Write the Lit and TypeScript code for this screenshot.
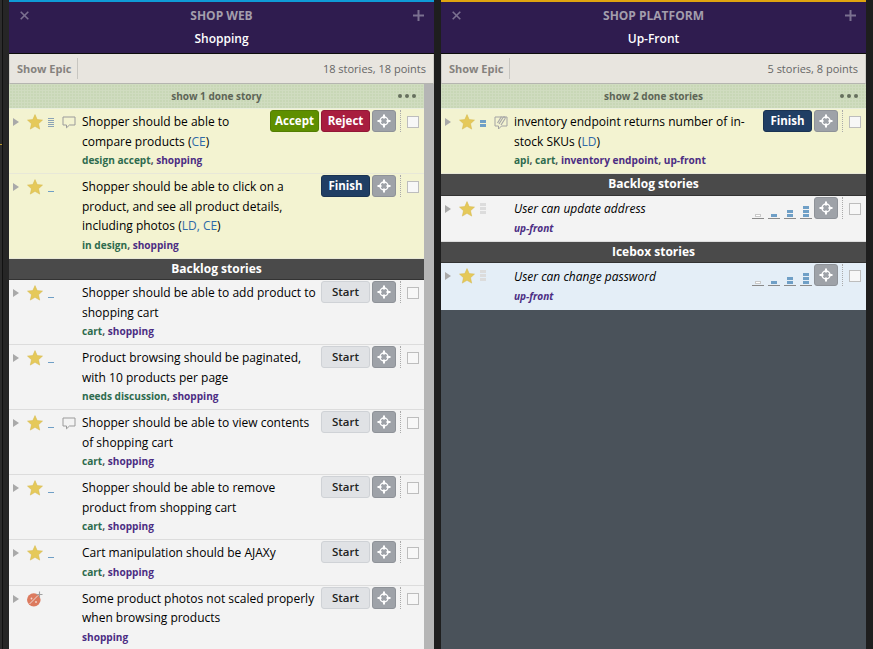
import { LitElement, html, css, svg, nothing } from "lit";
import { customElement } from "lit/decorators.js";

type Label = { t: string; epic?: boolean };
type Story = {
  text: string;
  owners?: string;
  labels: Label[];
  est?: string;
  comment?: "plain" | "clip";
  icon?: "star" | "bug";
  actions: string[];
  chooser?: boolean;
  tone?: "accepted" | "plain" | "ice";
  italic?: boolean;
};

const g = (t: string): Label => ({ t });
const p = (t: string): Label => ({ t, epic: true });

const left: (Story | string)[] = [
  { text: "Shopper should be able to compare products", owners: "CE", labels: [g("design accept"), p("shopping")], est: "five", comment: "plain", actions: ["Accept", "Reject"], tone: "accepted" },
  { text: "Shopper should be able to click on a product, and see all product details, including photos", owners: "LD, CE", labels: [g("in design"), p("shopping")], est: "one", actions: ["Finish"], tone: "accepted" },
  "Backlog stories",
  { text: "Shopper should be able to add product to shopping cart", labels: [g("cart"), p("shopping")], est: "one", actions: ["Start"] },
  { text: "Product browsing should be paginated, with 10 products per page", labels: [g("needs discussion"), p("shopping")], est: "one", actions: ["Start"] },
  { text: "Shopper should be able to view contents of shopping cart", labels: [g("cart"), p("shopping")], est: "one", comment: "plain", actions: ["Start"] },
  { text: "Shopper should be able to remove product from shopping cart", labels: [g("cart"), p("shopping")], est: "one", actions: ["Start"] },
  { text: "Cart manipulation should be AJAXy", labels: [g("cart"), p("shopping")], est: "one", actions: ["Start"] },
  { text: "Some product photos not scaled properly when browsing products", labels: [p("shopping")], icon: "bug", actions: ["Start"] },
];

const right: (Story | string)[] = [
  { text: "inventory endpoint returns number of in-stock SKUs", owners: "LD", labels: [g("api"), g("cart"), p("inventory endpoint"), p("up-front")], est: "two", comment: "clip", actions: ["Finish"], tone: "accepted" },
  "Backlog stories",
  { text: "User can update address", labels: [p("up-front")], est: "none", actions: [], chooser: true, italic: true },
  "Icebox stories",
  { text: "User can change password", labels: [p("up-front")], est: "none", actions: [], chooser: true, italic: true, tone: "ice" },
];

const star = svg`<svg class="star" viewBox="0 0 16 16" width="16" height="16"><path d="M8 .6l2.2 5 5.3.5-4 3.600 1.200 5.400L8 12.300l-4.700 2.800 1.200-5.400-4-3.600 5.300-.5z" fill="#e5c95a" stroke="#d4b64a" stroke-width=".5"/></svg>`;

const bug = svg`<svg class="star" viewBox="0 0 16 16" width="16" height="16">
  <ellipse cx="6.800" cy="8.800" rx="6.800" ry="6.600" fill="#dc7a5e"/>
  <path d="M2.500 13L11 4.500" stroke="#f3f3f3" stroke-width=".8"/>
  <circle cx="4.500" cy="7.500" r=".9" fill="#f3d9d0"/><circle cx="9" cy="11" r=".9" fill="#f3d9d0"/>
  <path d="M12.500 .5v6M9.500 3.500h6" stroke="#a0a0a0" stroke-width="1.100"/>
</svg>`;

const move = svg`<svg viewBox="0 0 16 16" width="16" height="16">
  <circle cx="8" cy="8" r="4" fill="none" stroke="#fff" stroke-width="1.500"/>
  <path d="M8 1.500v4M8 10.500v4M1.500 8h4M10.500 8h4" stroke="#fff" stroke-width="2"/>
</svg>`;

const closeIcon = svg`<svg viewBox="0 0 9 9" width="9" height="9"><path d="M.7.7l7.600 7.600M8.300.7L.7 8.300" stroke="#7b7090" stroke-width="1.600"/></svg>`;
const plusIcon = svg`<svg viewBox="0 0 11 11" width="11" height="11"><path d="M5.500 0v11M0 5.500h11" stroke="#7b7090" stroke-width="2"/></svg>`;

const commentIcon = svg`<svg viewBox="0 0 14 13" width="14" height="13"><path d="M1 1h12v8H7.500L4.500 11.800V9H1z" fill="none" stroke="#9b9b9b" stroke-width="1"/></svg>`;
const clipIcon = svg`<svg viewBox="0 0 14 15" width="14" height="15"><path d="M1 2h12v9H7.500L4.500 14v-3H1z" fill="none" stroke="#a3a3a3" stroke-width="1"/><path d="M5 9l4-6.500c1-1.500 2.800-.3 2 1.200L7 10M3.500 8l4-6.500" fill="none" stroke="#a8a8a8" stroke-width="1.200"/></svg>`;

@customElement("story-row")
class StoryRow extends LitElement {
  static properties = { story: { attribute: false } };
  declare story: Story;

  static styles = css`
    :host { display: block; }
    .row {
      display: flex;
      font: 12px/19.500px "Open Sans", sans-serif;
      color: #000;
      background: #f3f3f3;
      border-bottom: 1px solid #dcdcdc;
      padding: 3px 0 2.500px;
    }
    .row.accepted { background: #f3f3d1; border-bottom-color: #e8e8d8; }
    .row.ice { background: #e4eef7; border-bottom: none; padding-bottom: 3px; }
    .ice .text { padding-top: 1px; }
    .ice .labels { padding-top: .5px; }
    .it .labels { padding-top: .5px; }
    .meta { width: 73px; flex: none; display: flex; align-items: flex-start; height: 19px; padding-top: 2px; box-sizing: border-box; }
    .tri { width: 0; height: 0; border-left: 6px solid #a9a9a9; border-top: 4px solid transparent; border-bottom: 4px solid transparent; margin: 4px 0 0 4px; flex: none; }
    .star { margin: 0 0 0 8px; flex: none; }
    .est { width: 6px; height: 14px; margin: 0 1px 0 5px; flex: none; display: flex; flex-direction: column; justify-content: flex-end; gap: 1px; padding-bottom: 1px; box-sizing: border-box; }
    .est i { display: block; height: 3px; background: #6f9fc6; flex: none; }
    .est.five i { height: 1px; background: #8ba3b6; }
    .est.none i { background: #dcdcdc; }
    .est.one i { height: 1px; background: #6f9fc6; }
    .cmt { margin-left: 7px; flex: none; margin-top: 1px; }
    .body { flex: 1; min-width: 0; }
    .actions { float: right; display: flex; gap: 2px; margin: -2px 0 0 2px; height: 22px; align-items: stretch; }
    .btn { width: 49px; box-sizing: border-box; border-radius: 3px; font: 700 11.500px/20px "Open Sans", sans-serif; text-align: center; color: #fff; border: 1px solid transparent; }
    .Accept { background: #5e8f00; border-color: #537e02; }
    .Reject { background: #a81d3f; border-color: #921736; }
    .Finish { background: #203e64; border-color: #1a3352; }
    .Start { background: #e0e2e5; border-color: #cfd2d6; color: #222; font-weight: 600; }
    .mv { width: 24px; box-sizing: border-box; background: #9ea2a8; border: 1px solid #8e9298; border-radius: 3px; display: flex; align-items: center; justify-content: center; }
    .chooser { display: flex; gap: 4px; align-items: flex-end; }
    .ch { width: 12px; height: 20px; border-bottom: 1px solid #8a8a8a; display: flex; flex-direction: column; justify-content: flex-end; align-items: center; gap: 1px; padding-bottom: 1px; box-sizing: border-box; }
    .ch i { display: block; width: 6px; height: 3px; background: #6f9fc6; flex: none; }
    .ch i.empty { background: #fff; border: 1px solid #c9c9c9; box-sizing: border-box; }
    .labels { font: 700 10.100px/19.500px "Open Sans", sans-serif; color: #555; }
    .labels .g { color: #2e6b4e; }
    .labels .p { color: #4b2d83; }
    .owners { color: #2f6aa8; }
    .it .text, .it .labels { font-style: italic; }
    .side { flex: none; width: 28px; display: flex; height: 23px; margin-top: -2px; padding-left: 4px; box-sizing: border-box; }
    .dots { border-left: 1px dotted #aaa; height: 22px; }
    .cb { width: 10px; height: 10px; border: 1px solid #bdbdbd; background: #f7f7f7; margin: 6px 0 0 6px; box-sizing: content-box; flex: none; }
  `;

  est() {
    const s = this.story;
    const n: Record<string, number> = { five: 5, two: 2, none: 3, one: 1 };
    if (!s.est) return html`<span class="est"></span>`;
    return html`<span class="est ${s.est}">${Array.from({ length: n[s.est] }, () => html`<i></i>`)}</span>`;
  }

  render() {
    const s = this.story;
    return html`<div class="row ${s.tone ?? ""} ${s.italic ? "it" : ""}">
      <div class="meta">
        <span class="tri"></span>
        ${s.icon === "bug" ? bug : star}
        ${this.est()}
        ${s.comment ? html`<span class="cmt">${s.comment === "clip" ? clipIcon : commentIcon}</span>` : nothing}
      </div>
      <div class="body">
        <div class="actions">
          ${s.chooser
            ? html`<div class="chooser">
                <div class="ch"><i class="empty"></i></div>
                <div class="ch"><i></i></div>
                <div class="ch"><i></i><i></i></div>
                <div class="ch"><i></i><i></i><i></i></div>
              </div>`
            : nothing}
          ${s.actions.map((a) => html`<div class="btn ${a}">${a}</div>`)}
          <div class="mv">${move}</div>
        </div>
        <div class="text">${s.text}${s.owners ? html` (<span class="owners">${s.owners}</span>)` : nothing}</div>
        <div class="labels">
          ${s.labels.map((l, i) => html`<span class=${l.epic ? "p" : "g"}>${l.t}</span>${i < s.labels.length - 1 ? ", " : ""}`)}
        </div>
      </div>
      <div class="side"><span class="dots"></span><span class="cb"></span></div>
    </div>`;
  }
}

@customElement("story-panel")
class StoryPanel extends LitElement {
  static properties = {
    project: {}, title: {}, count: {}, done: {}, accent: {}, items: { attribute: false }, scroll: { type: Boolean },
  };
  declare project: string;
  declare title: string;
  declare count: string;
  declare done: string;
  declare accent: string;
  declare items: (Story | string)[];
  declare scroll: boolean;

  static styles = css`
    :host { display: flex; flex-direction: column; height: 649px; overflow: hidden; font-family: "Open Sans", sans-serif; background: #4a525a; }
    .accent { height: 2px; flex: none; }
    .head { height: 52px; box-sizing: border-box; flex: none; background: #2f1c4f; border-bottom: 1px solid #0c0c0c; padding: 0 10px; }
    .r1 { display: flex; justify-content: space-between; align-items: center; height: 27px; color: #a39eac; }
    .proj { font-size: 12px; font-weight: 700; line-height: 27px; }
    .icon { width: 11px; height: 11px; display: flex; align-items: center; justify-content: center; }
    .r2 { text-align: center; color: #fff; font-size: 12px; font-weight: 600; line-height: 20px; }
    .tool { height: 30px; flex: none; box-sizing: border-box; background: #e8e5df; border: 1px solid #cfcdc8; border-top: none; border-bottom: 1px solid #b5b5b0; display: flex; align-items: center; justify-content: space-between; padding: 0 7px; font-size: 11px; color: #666; }
    .epic { font-weight: 700; color: #85827e; padding-right: 5px; height: 21px; line-height: 21px; border-right: 1px solid #c8c6c1; }
    .main { flex: 1; display: flex; min-height: 0; }
    .list { flex: 1; min-width: 0; overflow: hidden; }
    .bar { width: 10px; flex: none; background: #b5b5b5; }
    .done {
      height: 25px; box-sizing: border-box; display: grid; grid-template-columns: 1fr auto 1fr; align-items: center;
      background-color: #c8d7b6;
      background-image: linear-gradient(to right, #d0dcc0 1px, transparent 1px), linear-gradient(to bottom, #d0dcc0 1px, transparent 1px);
      background-size: 3px 3px;
      border-bottom: 1px solid #e9eedd; font-size: 10px; font-weight: 700; color: #5d6557;
    }
    .dots { justify-self: end; display: flex; gap: 3px; padding-right: 8px; }
    .dots i { width: 4px; height: 4px; border-radius: 50%; background: #66705e; }
    .section { height: 21.500px; background: #4a4a4a; border-bottom: 1px solid #333; box-sizing: border-box; text-align: center; color: #fff; font-size: 12px; font-weight: 700; line-height: 20px; }
  `;

  render() {
    return html`
      <div class="accent" style="background:${this.accent}"></div>
      <div class="head">
        <div class="r1"><span class="icon">${closeIcon}</span><span class="proj">${this.project}</span><span class="icon">${plusIcon}</span></div>
        <div class="r2">${this.title}</div>
      </div>
      <div class="tool"><span class="epic">Show Epic</span><span>${this.count}</span></div>
      <div class="main">
        <div class="list">
          <div class="done"><span></span><span>${this.done}</span><span class="dots"><i></i><i></i><i></i></span></div>
          ${this.items.map((it) =>
            typeof it === "string"
              ? html`<div class="section">${it}</div>`
              : html`<story-row .story=${it}></story-row>`
          )}
        </div>
        ${this.scroll ? html`<div class="bar"></div>` : nothing}
      </div>
    `;
  }
}

@customElement("app-root")
class AppRoot extends LitElement {
  static styles = css`
    :host {
      display: grid; grid-template-columns: 425px 425px; gap: 7px; padding: 0 7px 0 9px; height: 649px; overflow: hidden;
      background-color: #1e1e1e;
      background-image: linear-gradient(#b8962a, #b8962a), linear-gradient(to right, #2c2c2c 2px, #111 2px, #111 3px, #262626 3px);
      background-size: 2px 1px, 9px 100%;
      background-position: 0 144px, 0 0;
      background-repeat: no-repeat;
    }
  `;
  render() {
    return html`
      <story-panel project="SHOP WEB" title="Shopping" count="18 stories, 18 points" done="show 1 done story" accent="#0f9bd7" .items=${left} scroll></story-panel>
      <story-panel project="SHOP PLATFORM" title="Up-Front" count="5 stories, 8 points" done="show 2 done stories" accent="#e0a410" .items=${right}></story-panel>
    `;
  }
}
